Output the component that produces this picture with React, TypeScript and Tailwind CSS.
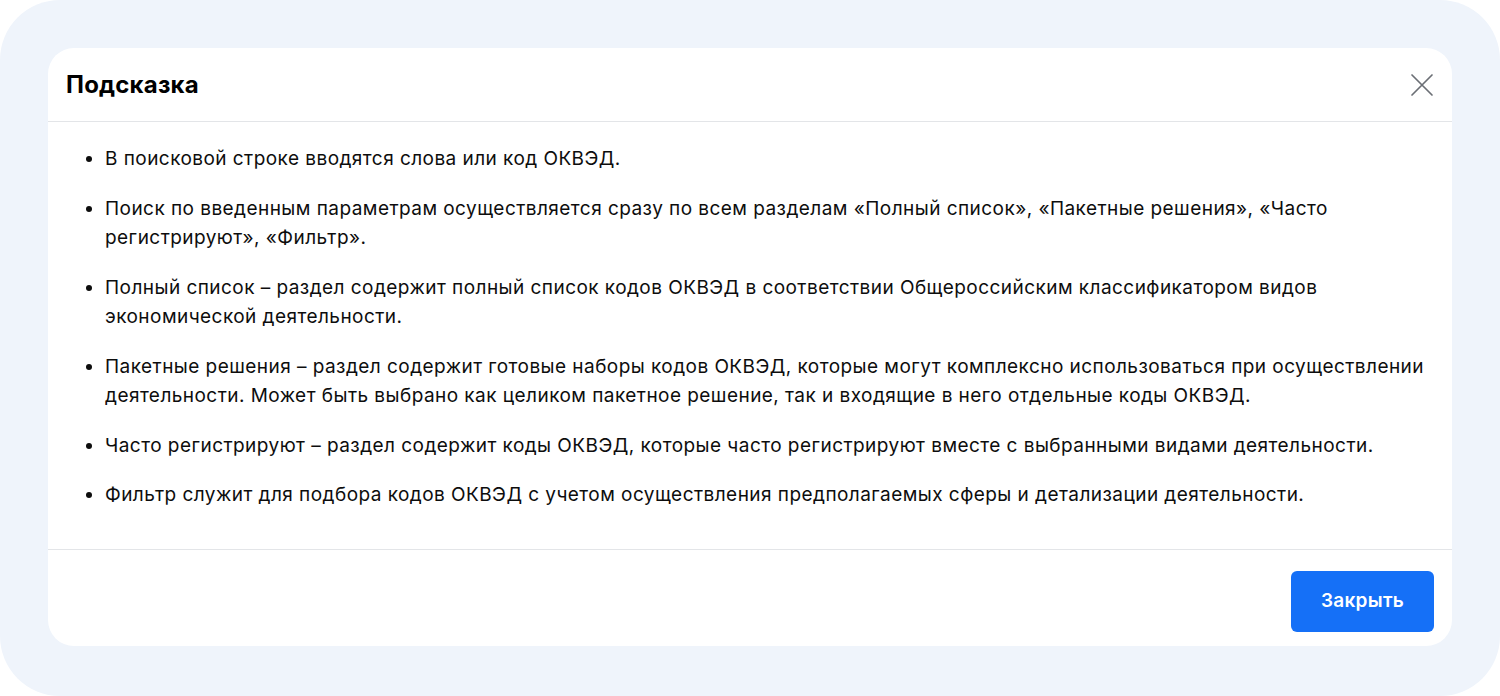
import React from "react";

const items: string[] = [
  "В поисковой строке вводятся слова или код ОКВЭД.",
  "Поиск по введенным параметрам осуществляется сразу по всем разделам «Полный список», «Пакетные решения», «Часто регистрируют», «Фильтр».",
  "Полный список – раздел содержит полный список кодов ОКВЭД в соответствии Общероссийским классификатором видов экономической деятельности.",
  "Пакетные решения – раздел содержит готовые наборы кодов ОКВЭД, которые могут комплексно использоваться при осуществлении деятельности. Может быть выбрано как целиком пакетное решение, так и входящие в него отдельные коды ОКВЭД.",
  "Часто регистрируют – раздел содержит коды ОКВЭД, которые часто регистрируют вместе с выбранными видами деятельности.",
  "Фильтр служит для подбора кодов ОКВЭД с учетом осуществления предполагаемых сферы и детализации деятельности.",
];

export default function App() {
  return (
    <div
      className="w-[1500px] h-[696px] bg-white"
      style={{ fontFamily: "Inter, 'Noto Sans', sans-serif" }}
    >
      <div className="w-full h-full rounded-[60px] bg-[#eff4fb] p-12">
        <div className="w-full h-[598px] bg-white rounded-[26px] flex flex-col">
          <div className="h-[74px] flex items-center justify-between pl-[18px] pr-[14px] border-b border-[#e3e5e8]">
            <h1 className="text-[24px] font-bold text-black tracking-[0.2px]">Подсказка</h1>
            <button className="w-8 h-8 flex items-center justify-center text-[#6b6f75]">
              <svg width="24" height="24" viewBox="0 0 24 24" fill="none" stroke="currentColor" strokeWidth="1.7" strokeLinecap="round">
                <path d="M2 2L22 22M22 2L2 22" />
              </svg>
            </button>
          </div>
          <div className="flex-1 pt-[22px] pl-[18px] pr-[10px] border-b border-[#e3e5e8]">
            <ul className="flex flex-col gap-[20px] list-disc pl-[39px] text-[19px] leading-[29.5px] tracking-[0.45px] text-[#0d0d0d]">
              {items.map((t, i) => (
                <li key={i} className="pl-0 marker:text-[#0d0d0d]">{t}</li>
              ))}
            </ul>
          </div>
          <div className="h-[96px] flex justify-end items-start pt-[21px] pr-[18px]">
            <button className="w-[143px] h-[61px] rounded-[6px] bg-[#1570f7] text-white text-[19px] font-semibold tracking-[0.3px]">
              Закрыть
            </button>
          </div>
        </div>
      </div>
    </div>
  );
}
